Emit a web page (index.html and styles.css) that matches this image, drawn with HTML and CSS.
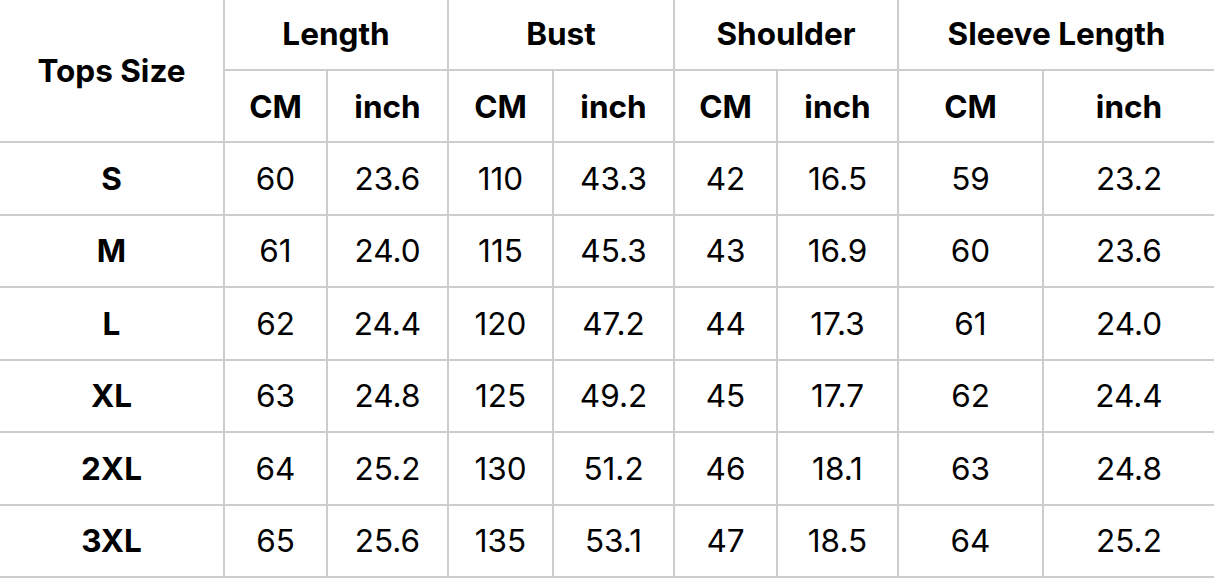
FILE: index.html
```html
<!DOCTYPE html>
<html lang="en">
<head>
<meta charset="utf-8">
<title>Tops Size Chart</title>
<link rel="stylesheet" href="styles.css">
</head>
<body>
<div class="chart">
  <div class="cell head size-head">Tops Size</div>
  <div class="cell head group">Length</div>
  <div class="cell head group">Bust</div>
  <div class="cell head group">Shoulder</div>
  <div class="cell head group">Sleeve Length</div>
  <div class="cell head">CM</div><div class="cell head">inch</div>
  <div class="cell head">CM</div><div class="cell head">inch</div>
  <div class="cell head">CM</div><div class="cell head">inch</div>
  <div class="cell head">CM</div><div class="cell head">inch</div>

  <div class="cell head">S</div><div class="cell">60</div><div class="cell">23.6</div><div class="cell">110</div><div class="cell">43.3</div><div class="cell">42</div><div class="cell">16.5</div><div class="cell">59</div><div class="cell">23.2</div>
  <div class="cell head">M</div><div class="cell">61</div><div class="cell">24.0</div><div class="cell">115</div><div class="cell">45.3</div><div class="cell">43</div><div class="cell">16.9</div><div class="cell">60</div><div class="cell">23.6</div>
  <div class="cell head">L</div><div class="cell">62</div><div class="cell">24.4</div><div class="cell">120</div><div class="cell">47.2</div><div class="cell">44</div><div class="cell">17.3</div><div class="cell">61</div><div class="cell">24.0</div>
  <div class="cell head">XL</div><div class="cell">63</div><div class="cell">24.8</div><div class="cell">125</div><div class="cell">49.2</div><div class="cell">45</div><div class="cell">17.7</div><div class="cell">62</div><div class="cell">24.4</div>
  <div class="cell head">2XL</div><div class="cell">64</div><div class="cell">25.2</div><div class="cell">130</div><div class="cell">51.2</div><div class="cell">46</div><div class="cell">18.1</div><div class="cell">63</div><div class="cell">24.8</div>
  <div class="cell head">3XL</div><div class="cell">65</div><div class="cell">25.6</div><div class="cell">135</div><div class="cell">53.1</div><div class="cell">47</div><div class="cell">18.5</div><div class="cell">64</div><div class="cell">25.2</div>
</div>
</body>
</html>
```

FILE: styles.css
```css
html, body {
  margin: 0;
  padding: 0;
  background: #ffffff;
}

.chart {
  display: grid;
  grid-template-columns: 223px 101px 119px 103px 119px 101px 119px 143px 170px;
  grid-template-rows: 69px 70px repeat(6, 1fr);
  gap: 2px;
  width: 1214px;
  height: 578px;
  box-sizing: border-box;
  padding-bottom: 2px;
  background: #cdcdcd;
  font-family: Inter, "Liberation Sans", Arial, sans-serif;
  color: #000000;
}

.cell {
  background: #ffffff;
  display: flex;
  align-items: center;
  justify-content: center;
  font-size: 31.5px;
  font-weight: 400;
}

.head {
  font-weight: 700;
}

.size-head {
  grid-row: span 2;
}

.group {
  grid-column: span 2;
  padding-bottom: 2px;
}
```
